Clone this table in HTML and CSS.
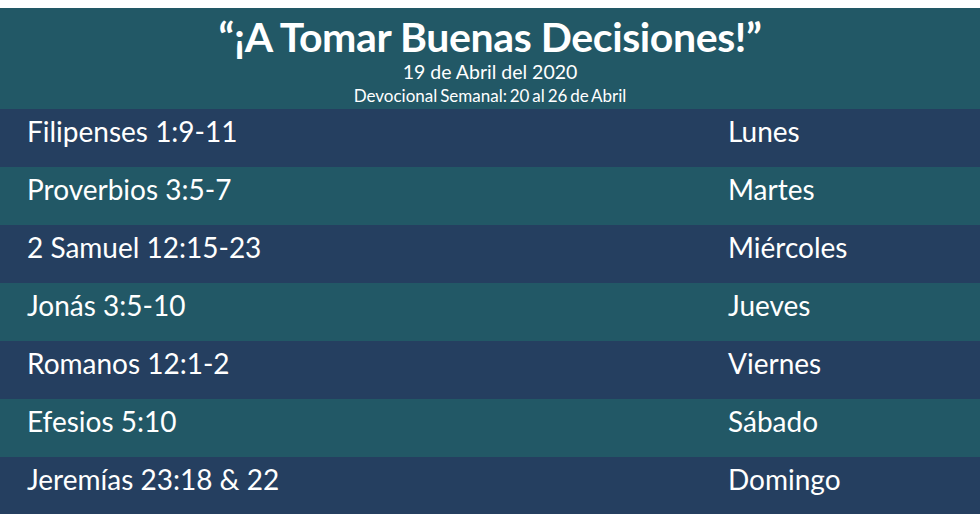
FILE: index.html
```html
<!DOCTYPE html>
<html lang="es">
<head>
  <meta charset="UTF-8" />
  <meta name="viewport" content="width=device-width, initial-scale=1.0" />
  <title>¡A Tomar Buenas Decisiones!</title>
  <link rel="stylesheet" href="styles.css">
</head>
<body>
  <div class="devocional">
    <div class="encabezado">
      <h1>“¡A Tomar Buenas Decisiones!”</h1>
      <div class="fecha">19 de Abril del 2020</div>
      <div class="semana">Devocional Semanal: 20 al 26 de Abril</div>
    </div>
    <div class="lecturas">
      <div class="fila azul"><span class="cita">Filipenses 1:9-11</span><span class="dia">Lunes</span></div>
      <div class="fila verde"><span class="cita">Proverbios 3:5-7</span><span class="dia">Martes</span></div>
      <div class="fila azul"><span class="cita">2 Samuel 12:15-23</span><span class="dia">Miércoles</span></div>
      <div class="fila verde"><span class="cita">Jonás 3:5-10</span><span class="dia">Jueves</span></div>
      <div class="fila azul"><span class="cita">Romanos 12:1-2</span><span class="dia">Viernes</span></div>
      <div class="fila verde"><span class="cita">Efesios 5:10</span><span class="dia">Sábado</span></div>
      <div class="fila azul"><span class="cita">Jeremías 23:18 &amp; 22</span><span class="dia">Domingo</span></div>
    </div>
  </div>
</body>
</html>
```

FILE: styles.css
```css
body {
  font-family: Lato, 'Noto Sans', sans-serif;
  background: #ffffff;
  margin: 0;
  padding: 0;
  height: 100vh;
  overflow: hidden;
}
.devocional {
  padding-top: 8px;
  color: #ffffff;
}
.encabezado {
  background: #225866;
  height: 101px;
  text-align: center;
  box-sizing: border-box;
  padding-top: 8px;
}
.encabezado h1 {
  margin: 0;
  font-size: 41px;
  font-weight: 700;
  line-height: 42px;
  letter-spacing: -0.4px;
}
.fecha {
  font-size: 19.5px;
  line-height: 22px;
  margin-top: 3px;
}
.semana {
  font-size: 17px;
  line-height: 20px;
  margin-top: 3px;
  word-spacing: -1.5px;
}
.lecturas {
  display: flex;
  flex-direction: column;
}
.fila {
  display: flex;
  align-items: flex-start;
  height: 58px;
  font-size: 28px;
  line-height: 34px;
  padding-top: 5px;
  box-sizing: border-box;
}
.azul {
  background: #253f60;
}
.verde {
  background: #225866;
}
.cita {
  width: 728px;
  padding-left: 27px;
  box-sizing: border-box;
}
```
